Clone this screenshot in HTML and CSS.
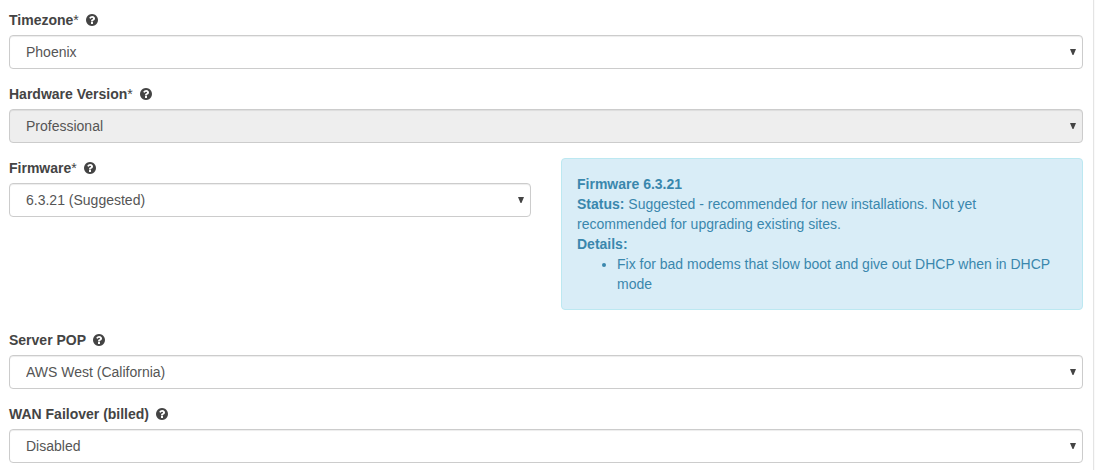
FILE: index.html
```
<!DOCTYPE html>
<html lang="en">
<head>
<meta charset="utf-8">
<title>Site settings</title>
<link rel="stylesheet" href="styles.css">
</head>
<body>
<svg width="0" height="0" class="sprite" aria-hidden="true">
  <symbol id="help" viewBox="0 0 1536 1536"><path d="M896 1248v-192q0-14-9-23t-23-9H672q-14 0-23 9t-9 23v192q0 14 9 23t23 9h192q14 0 23-9t9-23zm256-672q0-88-55.500-163T958 297t-170-41q-243 0-371 213-15 24 8 42l132 100q7 6 19 6 16 0 25-12 53-68 86-92 34-24 86-24 48 0 85.500 26t37.500 59q0 38-20 61t-68 45q-63 28-115.500 86.500T640 892v36q0 14 9 23t23 9h192q14 0 23-9t9-23q0-19 21.500-49.500T972 829q32-18 49-28.500t46-35 44.500-48 28-60.500 12.500-81zm384 192q0 209-103 385.500T1153.500 1433 768 1536t-385.500-103T103 1153.500 0 768t103-385.500T382.500 103 768 0t385.500 103T1433 382.500 1536 768z"/></symbol>
</svg>
<form class="panel">
  <div class="field">
    <label class="label" for="timezone"><span>Timezone<span class="required">*</span></span><svg class="help"><use href="#help"/></svg></label>
    <div class="select"><select class="control" id="timezone"><option>Phoenix</option></select></div>
  </div>
  <div class="field">
    <label class="label" for="hardware"><span>Hardware Version<span class="required">*</span></span><svg class="help"><use href="#help"/></svg></label>
    <div class="select"><select class="control" id="hardware" disabled><option>Professional</option></select></div>
  </div>
  <div class="row">
    <div class="field">
      <label class="label" for="firmware"><span>Firmware<span class="required">*</span></span><svg class="help"><use href="#help"/></svg></label>
      <div class="select"><select class="control" id="firmware"><option>6.3.21 (Suggested)</option></select></div>
    </div>
    <div class="alert">
      <p class="line"><strong>Firmware 6.3.21</strong></p>
      <p class="line"><strong>Status:</strong> Suggested - recommended for new installations. Not yet recommended for upgrading existing sites.</p>
      <p class="line"><strong>Details:</strong></p>
      <ul class="details"><li>Fix for bad modems that slow boot and give out DHCP when in DHCP mode</li></ul>
    </div>
  </div>
  <div class="field">
    <label class="label" for="pop"><span>Server POP</span><svg class="help"><use href="#help"/></svg></label>
    <div class="select"><select class="control" id="pop"><option>AWS West (California)</option></select></div>
  </div>
  <div class="field">
    <label class="label" for="failover"><span>WAN Failover (billed)</span><svg class="help"><use href="#help"/></svg></label>
    <div class="select"><select class="control" id="failover"><option>Disabled</option></select></div>
  </div>
</form>
</body>
</html>
```
FILE: styles.css
```
* {
  box-sizing: border-box;
}

body {
  margin: 0;
  padding-right: 1px;
  background: #fafafa;
  color: #444;
  font: 14px/20px "Liberation Sans", Arial, sans-serif;
}

.sprite {
  position: absolute;
}

.panel {
  min-height: 100vh;
  padding: 10px 10px 7px 9px;
  border-right: 1px solid #e4e4e4;
  background: #fff;
  display: flex;
  flex-direction: column;
  gap: 15px;
}

.field {
  display: flex;
  flex-direction: column;
  gap: 5px;
}

.label {
  display: flex;
  align-items: center;
  align-self: flex-start;
  gap: 7px;
  font-weight: 700;
}

.required {
  font-weight: 400;
}

.help {
  width: 12px;
  height: 12px;
  fill: currentColor;
}

.select {
  position: relative;
}

.select::after {
  content: "";
  position: absolute;
  top: 14px;
  right: 7px;
  width: 6px;
  height: 6px;
  background: #444;
  clip-path: polygon(0 0, 100% 0, 58% 100%, 42% 100%);
  pointer-events: none;
}

.control {
  appearance: none;
  display: block;
  width: 100%;
  height: 34px;
  padding: 6px 16px;
  border: 1px solid #ccc;
  border-radius: 4px;
  background: #fff;
  box-shadow: inset 0 1px 1px rgba(0, 0, 0, .075);
  color: #555;
  font: inherit;
}

.control:disabled {
  background: #eee;
  opacity: 1;
}

.row {
  display: grid;
  grid-template-columns: 1fr 1fr;
  gap: 30px;
  align-items: start;
  margin-bottom: 5px;
}

.alert {
  padding: 15px;
  border: 1px solid #bce8f1;
  border-radius: 4px;
  background: #d9edf7;
  color: #3a87ad;
}

.line {
  margin: 0;
}

.details {
  margin: 0;
  padding-left: 40px;
}
```
